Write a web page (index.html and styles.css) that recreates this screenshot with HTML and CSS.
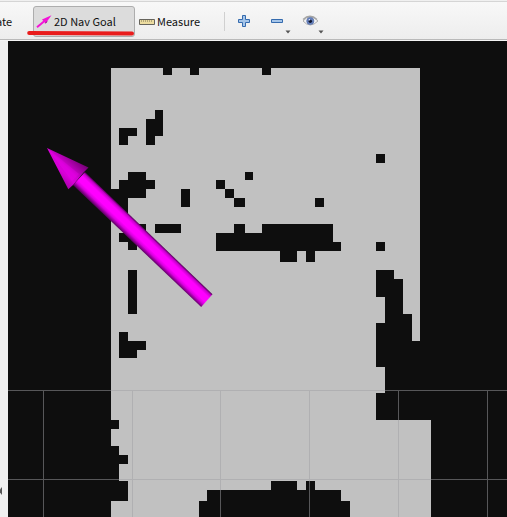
FILE: index.html
```html
<!DOCTYPE html>
<html lang="en">
<head>
<meta charset="utf-8">
<title>Navigation view</title>
<link rel="stylesheet" href="styles.css">
</head>
<body>
<header class="toolbar">
  <span class="estimate">ate</span>
  <button class="tool active">
    <svg class="arrow-icon" width="16" height="14" viewBox="0 0 16 14"><path d="M1 12.3 8.5 6" stroke="#f314d7" stroke-width="2"/><path d="M15.5.2 6 4.5 9.6 8.6Z" fill="#f314d7"/><path d="M9.5 8.3 11 6.4" stroke="#8c087c"/></svg>
    <span class="nav-label">2D Nav Goal</span>
    <svg class="marker" width="107" height="6" viewBox="0 0 107 6"><path d="M2.2 3 105 3.4" stroke="#e91c1c" stroke-width="4" stroke-linecap="round"/></svg>
  </button>
  <button class="tool measure">
    <svg width="16" height="8" viewBox="0 0 16 8"><path d="M.5 1.5h15v5H.5z" fill="#ecdca0" stroke="#66645c"/><path d="M2.5 2v2m2-2v2m2-2v2m2-2v2m2-2v2m2-2v2" stroke="#a69b70" stroke-width=".8"/></svg>
    <span class="measure-label">Measure</span>
  </button>
  <span class="separator"></span>
  <svg class="controls" width="90" height="26" viewBox="0 0 90 26">
    <path d="M4.500 5.500h3v4h4v3h-4v4h-3v-4h-4v-3h4z" fill="#a5c5e9" stroke="#356bae"/>
    <path d="M33.500 9.500h11v3h-11z" fill="#a5c5e9" stroke="#356bae"/>
    <path d="M47.500 20.500h5l-2.500 3zM80.500 20.500h5l-2.500 3z" fill="#555"/>
    <path d="M65 11Q72 2.500 80 11 72 19 65 11Z" fill="#f4f4f4" stroke="#b0b0b0"/>
    <path d="M65 9.500Q72 3 79 9.500" fill="none" stroke="#a5a5a5" stroke-width="1.300"/>
    <circle cx="72.300" cy="11" r="3.600" fill="#6682bf" stroke="#5870a7" stroke-width=".7"/><circle cx="72.300" cy="11.200" r="1.700" fill="#10172f"/><circle cx="71.500" cy="9.700" r=".8" fill="#dce7ff"/>
  </svg>
</header>
<main class="workspace">
  <aside class="splitter"><svg width="3" height="8" viewBox="0 0 3 8"><path d="M2 0v8L0 5.500v-3z" fill="#555"/></svg></aside>
  <svg class="map" width="499" height="476" viewBox="8 41 499 476">
    <defs>
      <linearGradient id="shaft" gradientUnits="userSpaceOnUse" x1="201" y1="307" x2="212.900" y2="294.600">
        <stop offset="0" stop-color="#65006a"/><stop offset=".22" stop-color="#d900df"/><stop offset=".38" stop-color="#f0f"/><stop offset=".7" stop-color="#f0f"/><stop offset=".88" stop-color="#c700cc"/><stop offset="1" stop-color="#4c0050"/>
      </linearGradient>
      <linearGradient id="head" gradientUnits="userSpaceOnUse" x1="68" y1="189" x2="88" y2="168">
        <stop offset="0" stop-color="#a800a8"/><stop offset=".3" stop-color="#d800d8"/><stop offset=".5" stop-color="#d400d4"/><stop offset="1" stop-color="#760076"/>
      </linearGradient>
    </defs>
    <g shape-rendering="crispEdges">
      <path fill="#c1c1c1" d="M111 68H163V75H172V68H190V75H199V68H262V75H271V68H420V341H412V314H403V279H394V270H376V297H385V323H376V367H385V393H376V420H431V517H111V501H128V481H119V464H128V455H119V446H111V429H119V420H111Z"/>
      <path fill="#0e0e0e" d="M155 110h8v26h-8v9h-9v-26h9zM119 128h18v8h-9v9h-9zM128 172h18v8h9v9h-9v9h-18v17h-17v-26h8v-9h9zM128 224h18v9h-9v17h-9v-8h-9v-9h9zM155 224h26v9h-26zM181 189h9v18h-9zM216 180h9v9h9v9h11v9h-11v-9h-9v-9h-9zM245 172h8v8h-8zM315 198h9v9h-9zM376 154h9v9h-9zM376 242h9v9h-9zM216 233h18v-9h11v9h17v-9h71v18h8v9h-26v11h-9v-11h-9v11h-17v-11h-64zM128 270h9v44h-9zM119 332h9v9h18v9h-9v8h-18zM199 517v-16h8v-11h64v-9h26v9h9v-9h9v9h26v11h9v16z"/>
      <path fill="none" stroke="#a0a0a4" stroke-opacity=".5" d="M8 390.500H507M8 479.500H507M43.500 391V517M132.500 391V517M220.500 391V517M309.500 391V517M398.500 391V517M487.500 391V517"/>
    </g>
    <path fill="url(#shaft)" d="M73 185 85 172 212.500 294.300 201.200 307Z"/>
    <path fill="url(#head)" d="M47 148 88.500 167.500 84 172 73 185 68.300 189.300Z"/>
    <path fill="#f0f" fill-opacity=".25" d="M47 148 79 174 72 181Z"/>
  </svg>
</main>
</body>
</html>
```
FILE: styles.css
```css
* { box-sizing: border-box; }
body {
  margin: 0;
  width: 507px;
  height: 517px;
  overflow: hidden;
  background: #efefef;
  color: #111;
  font: 11px "Noto Sans CJK SC", "Noto Sans", sans-serif;
}
.toolbar {
  display: flex;
  align-items: flex-start;
  height: 41px;
  padding-top: 6px;
  border-bottom: 1px solid #f5f5f5;
  background: linear-gradient(#f0f0f0 1px, #d5d5d5 1px, #d5d5d5 2px, #f8f8f8 2px, #ededed 39px, #b9b9b9 39px);
}
.estimate {
  width: 37px;
  margin-left: -4px;
  line-height: 31px;
}
.tool {
  display: flex;
  align-items: center;
  height: 31px;
  margin: 0;
  padding: 0;
  border: 0;
  background: none;
  color: inherit;
  font: inherit;
  line-height: 31px;
  white-space: nowrap;
}
.active {
  position: relative;
  width: 102px;
  padding-left: 2px;
  border: 1px solid #adadad;
  border-radius: 3px;
  background: #dcdcdc;
}
.arrow-icon { margin-right: 2px; flex: none; }
.marker { position: absolute; left: -7px; top: 23px; }
.measure { width: 89px; padding-left: 4px; gap: 2px; }
.separator { width: 1px; height: 19px; margin-top: 6px; background: #d0d0d0; }
.controls { margin: 4px 0 0 13px; flex: none; }
.workspace { display: flex; height: 476px; }
.splitter { width: 8px; padding-top: 446px; background: #efefef; }
.splitter svg { display: block; }
.map { display: block; flex: none; background: #0e0e0e; }
```
